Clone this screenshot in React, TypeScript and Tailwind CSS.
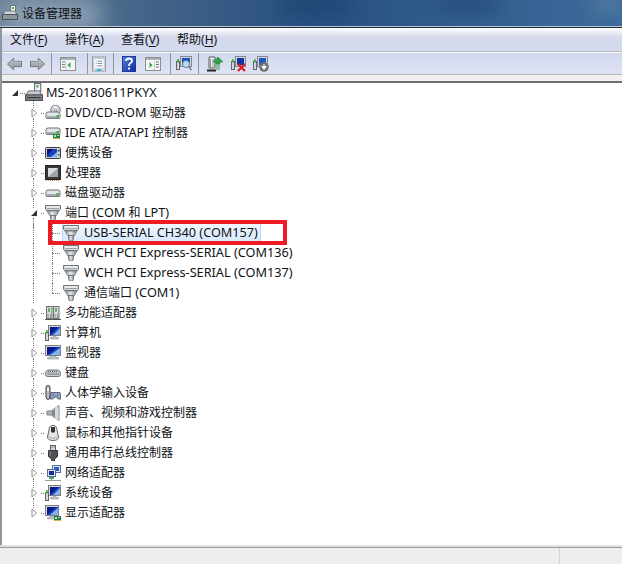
import React from "react";

const Svg = ({ children, s = 16 }: { children: React.ReactNode; s?: number }) => (
  <svg width={s} height={s} viewBox="0 0 16 16" className="block shrink-0">
    {children}
  </svg>
);

function T({ text }: { text: string }) {
  const parts = text.split(/([\u3000-\u9fff]+)/).filter(Boolean);
  return (
    <span className="-mt-[2px] whitespace-nowrap text-[12.7px]">
      {parts.map((p, i) =>
        /[\u3000-\u9fff]/.test(p) ? (
          <span key={i} className="text-[12px]">
            {p}
          </span>
        ) : (
          <span key={i} className="whitespace-pre">
            {p}
          </span>
        ),
      )}
    </span>
  );
}

const PortIcon = () => (
  <Svg>
    <defs>
      <linearGradient id="pg" x1="0" y1="0" x2="1" y2="0">
        <stop offset="0" stopColor="#858b90" />
        <stop offset="0.45" stopColor="#e6e9eb" />
        <stop offset="1" stopColor="#7c8287" />
      </linearGradient>
    </defs>
    <path d="M0.5 0.5h15v3.5l-1 1.5h-13l-1-1.5z" fill="#d6d9dc" stroke="#6f757a" />
    <path d="M2 2h12" stroke="#fbfcfc" />
    <path d="M2 3.5h12" stroke="#9ca2a7" />
    <path d="M2 6h12l-2.5 4.5h-7z" fill="url(#pg)" stroke="#787e83" strokeWidth="0.8" />
    <path d="M5.5 10.5h5v3l-1 2.5h-3l-1-2.5z" fill="url(#pg)" stroke="#62676c" strokeWidth="0.8" />
  </Svg>
);

const Drive = ({ y = 9 }: { y?: number }) => (
  <g>
    <path d={`M1 ${y + 1}q0-2 2-2h10q2 0 2 2v3.5q0 1-1 1h-12q-1 0-1-1z`} fill="#e3e6e8" stroke="#6c7276" />
    <path d={`M1.5 ${y + 3}h13v2.2h-13z`} fill="#a4abb0" />
    <rect x="11.5" y={y + 2} width="2.5" height="2.5" fill="#49ad38" />
  </g>
);

const Monitor = ({ x = 0, y = 0, w = 13, h = 10 }: { x?: number; y?: number; w?: number; h?: number }) => (
  <g>
    <rect x={x + 0.5} y={y + 0.5} width={w} height={h} fill="#d5d8db" stroke="#7b7f83" />
    <path d={`M${x + 2} ${y + 2}h${w - 2}v${h - 2}h-${w - 2}z`} fill="#1746c4" />
    <path d={`M${x + 2} ${y + 2}h${w - 4}l-${w - 4} ${h - 2}z`} fill="#061a8a" />
    <path d={`M${x + w} ${y + 3}v${h - 3}h-${w - 5}z`} fill="#86b2ec" />
    <path d={`M${x + 5} ${y + h + 1}h${w - 9}v1.5h2.5v1.5h-${w - 4}v-1.5h2.5z`} fill="#c5c9cc" stroke="#7f8387" strokeWidth="0.5" />
  </g>
);

const Plug = ({ x = 0, y = 6 }: { x?: number; y?: number }) => (
  <g>
    <rect x={x + 0.5} y={y + 0.5} width="3" height="8" fill="#d4d8db" stroke="#62676b" />
    <rect x={x + 1.2} y={y - 2} width="1.6" height="3.5" fill="#3aad30" />
  </g>
);

const Card = ({ x = 9, y = 11 }: { x?: number; y?: number }) => (
  <g>
    <rect x={x} y={y} width="7" height="5" fill="#23804a" />
    <path d={`M${x + 1} ${y + 1}h2v2h-2zM${x + 4} ${y + 1}h2v1h-2z`} fill="#b9e2b4" />
    <path d={`M${x} ${y + 4.5}h7`} stroke="#d5b347" />
  </g>
);

const ICONS: Record<string, () => React.ReactElement> = {
  root: () => (
    <Svg s={18}>
      <rect x="8.5" y="0.5" width="5.5" height="7" fill="#f2f5f2" stroke="#6d7275" />
      <rect x="10" y="2" width="2" height="2" fill="#4bb042" />
      <path d="M3 7h10l2 4h-14z" fill="#c4c9cd" stroke="#676c70" strokeWidth="0.8" />
      <rect x="0.5" y="10.5" width="15" height="5" fill="#7f868c" stroke="#4d5257" />
      <path d="M2 13h12" stroke="#30363b" />
    </Svg>
  ),
  dvd: () => (
    <Svg>
      <circle cx="10.5" cy="5" r="4.8" fill="#cfd4d8" stroke="#767b7f" />
      <path d="M10.5 5L8 1h5z" fill="#f1f3f4" />
      <path d="M10.5 5l3.5 3-2.5 1.5z" fill="#a97fc0" />
      <circle cx="10.5" cy="5" r="1" fill="#fff" stroke="#666" strokeWidth="0.5" />
      <Drive y={8} />
    </Svg>
  ),
  ide: () => (
    <Svg>
      <Drive y={4} />
      <Card x={8} y={9} />
    </Svg>
  ),
  portable: () => (
    <Svg>
      <rect x="0.5" y="2.5" width="15" height="11" rx="1" fill="#c9ccce" stroke="#3a3e41" />
      <rect x="2" y="4" width="10" height="8" fill="#1640bd" />
      <path d="M2 4h6l-6 7z" fill="#05156f" />
      <path d="M12 7v5h-6z" fill="#86b2ec" />
      <rect x="13" y="5" width="1.5" height="1.5" fill="#222" />
      <rect x="13" y="9" width="1.5" height="1.5" fill="#555" />
    </Svg>
  ),
  cpu: () => (
    <Svg>
      <rect x="0.5" y="0.5" width="15" height="14" fill="#383838" stroke="#262626" />
      <rect x="3" y="3" width="10" height="9" fill="#a0a4a7" />
      <path d="M3 3h10l-10 9z" fill="#d9dcde" />
      <path d="M1 15.5h14" stroke="#c9973a" strokeDasharray="1 1" />
    </Svg>
  ),
  disk: () => (
    <Svg>
      <Drive y={6} />
    </Svg>
  ),
  port: PortIcon,
  multi: () => (
    <Svg>
      <rect x="1.5" y="1.5" width="5.5" height="12" fill="#d5dad6" stroke="#6b7175" />
      <rect x="8.5" y="1.5" width="5.5" height="12" fill="#d5dad6" stroke="#6b7175" />
      <path d="M4 3v4M11 3v4" stroke="#36ab31" strokeWidth="1.5" />
      <path d="M0 14.5h16" stroke="#50555a" />
      <path d="M3 9v4M5.5 9v4M10 9v4M12.5 9v4" stroke="#8a9094" />
    </Svg>
  ),
  computer: () => (
    <Svg>
      <Monitor x={3} y={0} w={12} h={10} />
      <Plug x={0} y={7} />
    </Svg>
  ),
  monitor: () => (
    <Svg>
      <Monitor x={0} y={0} w={15} h={10} />
    </Svg>
  ),
  keyboard: () => (
    <Svg>
      <path d="M0.5 9.5q0-4.5 3-4.5h9q3 0 3 4.5q0 2-2 2h-11q-2 0-2-2z" fill="#c7ccd0" stroke="#70767b" />
      <path d="M3 6.5h10M2.5 8h11M2.5 9.5h11" stroke="#5e6469" strokeDasharray="1 1" />
    </Svg>
  ),
  hid: () => (
    <Svg>
      <path d="M1 3q0-2.5 2-2.5t2 2.5v8q0 3.5-2 3.5t-2-3.5z" fill="#bcc2c6" stroke="#2f3539" />
      <rect x="2" y="3" width="2" height="3" fill="#eef" />
      <path d="M6 7.5h9l1 6.5h-3l-1-2h-3l-1 2h-3z" fill="#93a3c2" stroke="#3f4a5e" strokeWidth="0.8" />
      <path d="M8 10h1M12 10h1" stroke="#1f3e8a" />
    </Svg>
  ),
  sound: () => (
    <Svg>
      <path d="M2 6h4l8-5.5v15l-8-5.5h-4z" fill="#aeb3b7" stroke="#7f8488" />
      <path d="M10 3v10l3.5 2V1z" fill="#d9dcdf" />
      <path d="M7 6.5l3-2v7l-3-2z" fill="#7f8488" />
    </Svg>
  ),
  mouse: () => (
    <Svg>
      <path d="M4 5q0-4.5 4-4.5t4 4.5l1.5 7q0 3.5-5.5 3.5t-5.5-3.5z" fill="#e2e4e6" stroke="#676b6f" />
      <path d="M6 2h4v5q-2 1.5-4 0z" fill="#333538" />
      <path d="M3.5 12q4 3 9 0" stroke="#a2a6a9" fill="none" />
    </Svg>
  ),
  usb: () => (
    <Svg>
      <rect x="5.5" y="0.5" width="5" height="5" fill="#d5d8da" stroke="#5d6165" />
      <path d="M6.5 2h1M8.5 2h1" stroke="#555" />
      <path d="M3.5 5.5h9v6l-3 2.5v2h-3v-2l-3-2.5z" fill="#505458" stroke="#35383b" />
      <path d="M5 6v5" stroke="#85898d" />
    </Svg>
  ),
  network: () => (
    <Svg>
      <rect x="7.5" y="0.5" width="8" height="7" fill="#e0e4f0" stroke="#5c6ba0" />
      <rect x="9" y="2" width="5" height="4" fill="#2a59c8" />
      <rect x="2.5" y="4.5" width="8" height="7" fill="#e0e4f0" stroke="#5c6ba0" />
      <rect x="4" y="6" width="5" height="4" fill="#103398" />
      <path d="M6.5 11.5v3M4 13h5" stroke="#1f9c42" strokeWidth="1.5" />
      <path d="M0 15.5h16" stroke="#95a09e" />
    </Svg>
  ),
  system: () => (
    <Svg>
      <Monitor x={3} y={0} w={12} h={10} />
      <Plug x={0} y={7} />
    </Svg>
  ),
  display: () => (
    <Svg>
      <Monitor x={0} y={0} w={13} h={10} />
      <Card x={9} y={11} />
    </Svg>
  ),
};

const dots = "border-dotted border-[#7a7a7a]";

function Expander({ open }: { open?: boolean }) {
  return open ? (
    <svg width="8" height="8" viewBox="0 0 8 8" className="block">
      <path d="M7 1v6H1z" fill="#333" />
    </svg>
  ) : (
    <svg width="8" height="10" viewBox="0 0 8 10" className="block">
      <path d="M2 1l4.5 4-4.5 4z" fill="#fff" stroke="#8f8f8f" />
    </svg>
  );
}

function Category({ icon, label, open, last }: { icon: string; label: string; open?: boolean; last?: boolean }) {
  const Icon = ICONS[icon];
  return (
    <div className="relative flex h-5 items-center pl-[28px]">
      <span className="flex w-2 justify-center">
        <Expander open={open} />
      </span>
      <span className={`ml-[3px] w-[3px] border-t ${dots}`} />
      <span className="ml-[1px]">
        <Icon />
      </span>
      <span className="ml-[4px] flex items-center">
        <T text={label} />
      </span>
      {!last && <span className={`absolute left-[31px] top-[15px] h-[10px] border-l ${dots}`} />}
    </div>
  );
}

function Port({ label, selected, last }: { label: string; selected?: boolean; last?: boolean }) {
  return (
    <div className="relative flex h-5 items-center pl-[50px]">
      <span className={`absolute left-[31px] top-0 h-5 border-l ${dots}`} />
      <span className={`absolute left-[50px] top-0 border-l ${dots} ${last ? "h-[10px]" : "h-5"}`} />
      <span className={`w-2 border-t ${dots}`} />
      <span
        className={`ml-[2px] flex h-[21px] items-center border-x pr-[3px] ${
          selected
            ? "w-[199px] border-[#b8d6f3] bg-gradient-to-b from-[#f3f8fe] to-[#d3e6fa]"
            : "border-transparent"
        }`}
      >
        <PortIcon />
        <span className="ml-[5px] flex items-center">
          <T text={label} />
        </span>
      </span>
    </div>
  );
}

const Sep = ({ w }: { w: number }) => (
  <span className="flex justify-center" style={{ width: w }}>
    <span className="h-[22px] w-px bg-[#8f939c]" />
  </span>
);

const Slot = ({ w, children }: { w: number; children: React.ReactNode }) => (
  <span className="flex justify-center" style={{ width: w }}>
    {children}
  </span>
);

const Arrow = ({ flip }: { flip?: boolean }) => (
  <svg width="17" height="14" viewBox="0 0 18 16" className={flip ? "block -scale-x-100" : "block"}>
    <path d="M1 8l7-6.5v3.5h9v6H8v3.5z" fill="#a5a8ac" stroke="#686b6f" />
    <path d="M3 8l4-4v2h9" fill="none" stroke="#c9cccf" />
  </svg>
);

const Win = ({ variant }: { variant: "l" | "r" }) => (
  <svg width="16" height="14" viewBox="0 0 16 14" className="block">
    <rect x="0.5" y="0.5" width="15" height="13" fill="#f6f7f7" stroke="#8c9094" />
    <path d="M1 1h14v2H1z" fill="#aab0b5" />
    {variant === "l" ? (
      <>
        <path d="M2 5h3M2 7.5h3M2 10h3" stroke="#777" />
        <path d="M10.5 5v6l-3-3z" fill="#2fa64a" />
        <path d="M6 4v9" stroke="#c4c8cb" />
      </>
    ) : (
      <>
        <path d="M11 5h3M11 7.5h3M11 10h3" stroke="#777" />
        <path d="M4.5 5v6l3-3z" fill="#2fa64a" />
        <path d="M9.5 4v9" stroke="#c4c8cb" />
      </>
    )}
  </svg>
);

const Props = () => (
  <svg width="15" height="16" viewBox="0 0 15 16" className="block">
    <rect x="0.5" y="0.5" width="14" height="15" fill="#e8ecef" stroke="#8d9296" />
    <rect x="2" y="2" width="11" height="11" fill="#fff" stroke="#c1c6ca" />
    <path d="M4 5h1M6 5h5M4 7.5h1M6 7.5h5M4 10h1M6 10h5" stroke="#6d7ea0" />
    <rect x="5" y="13.5" width="5" height="2" fill="#2fb4e8" />
  </svg>
);

const Help = () => (
  <svg width="14" height="16" viewBox="0 0 14 16" className="block">
    <defs>
      <linearGradient id="hg" x1="0" y1="0" x2="1" y2="1">
        <stop offset="0" stopColor="#5a7fe0" />
        <stop offset="1" stopColor="#0d2a9a" />
      </linearGradient>
    </defs>
    <rect x="0.5" y="0.5" width="13" height="15" fill="url(#hg)" stroke="#1f3a9a" />
    <path d="M4 5q0-2.5 3-2.5t3 2.5q0 1.5-2 2.5q-1 .6-1 2.5" fill="none" stroke="#fff" strokeWidth="1.8" />
    <rect x="6" y="11.5" width="2" height="2" fill="#fff" />
  </svg>
);

const Scan = () => (
  <svg width="16" height="16" viewBox="0 0 16 16" className="block">
    <Plug x={0} y={5} />
    <rect x="4.5" y="0.5" width="11" height="10" fill="#d5dade" stroke="#82878b" />
    <rect x="6" y="2" width="8" height="7" fill="#1d4fc4" />
    <circle cx="10" cy="8" r="3.5" fill="#b8dcf5" stroke="#6d7d8a" />
    <path d="M12.5 10.5l3 3.5" stroke="#7b8186" strokeWidth="1.6" />
  </svg>
);

const Update = () => (
  <svg width="16" height="16" viewBox="0 0 16 16" className="block">
    <path d="M2 1h6v11H2z" fill="#eceeea" stroke="#55595c" />
    <path d="M3.5 3v8M6 3v8" stroke="#8f9498" />
    <path d="M0 14.5h9" stroke="#222" strokeWidth="2" />
    <path d="M11 1l5 5h-3v2h-4v-2h-3z" fill="#2aa64a" stroke="#1d7a35" strokeWidth="0.5" />
    <path d="M9 9h4M9 11h4M9 13h4" stroke="#2aa64a" strokeWidth="1.2" />
  </svg>
);

const Disable = () => (
  <svg width="16" height="16" viewBox="0 0 16 16" className="block">
    <Plug x={0} y={5} />
    <rect x="4.5" y="0.5" width="10" height="10" fill="#d5dade" stroke="#82878b" />
    <rect x="6" y="2" width="7" height="7" fill="#12329f" />
    <path d="M7 8l7 7M14 8l-7 7" stroke="#dd1f26" strokeWidth="2.4" />
  </svg>
);

const Uninstall = () => (
  <svg width="16" height="16" viewBox="0 0 16 16" className="block">
    <Plug x={0} y={5} />
    <rect x="4.5" y="0.5" width="10" height="10" fill="#d5dade" stroke="#82878b" />
    <rect x="6" y="2" width="7" height="7" fill="#2155c8" />
    <circle cx="11" cy="11" r="4.8" fill="#6f7377" />
    <path d="M11 8v4M8.8 10.5L11 13.5l2.2-3z" stroke="#fff" fill="#fff" />
  </svg>
);

function Menu({ label, k, w }: { label: string; k: string; w: number }) {
  return (
    <span className="whitespace-nowrap" style={{ width: w }}>
      {label}(<span className="underline underline-offset-2">{k}</span>)
    </span>
  );
}

export default function App() {
  return (
    <div className="flex h-[564px] w-[622px] flex-col overflow-hidden bg-white font-['Noto_Sans','Noto_Sans_CJK_SC',sans-serif] text-[12px] leading-none text-[#0f1216]">
      <div className="relative flex h-[26px] shrink-0 items-center overflow-hidden bg-gradient-to-r from-[#5d7791] via-[#274f7f] to-[#3c6c9c] pl-[2px]">
        <span className="absolute top-0 left-0 h-[30px] w-[100px] bg-[#97a7b8] blur-md" />
        <span className="absolute top-[2px] left-[280px] h-[8px] w-[70px] bg-[#1c3f6a] blur-sm" />
        <span className="absolute top-[2px] left-[440px] h-[8px] w-[60px] bg-[#1f4470] blur-sm" />
        <span className="absolute top-0 right-0 h-[10px] w-[30px] bg-[#5c7f9f] blur-sm" />
        <span className="relative">
          <svg width="16" height="16" viewBox="0 0 16 16" className="block">
            <rect x="8.5" y="0.5" width="5" height="6" fill="#f2f5f2" stroke="#6d7275" />
            <rect x="10" y="2" width="2" height="2" fill="#4bb042" />
            <path d="M3 6h10l2 4H1z" fill="#cfd4d8" stroke="#676c70" strokeWidth="0.8" />
            <rect x="0.5" y="9.5" width="15" height="5" fill="#8f969c" stroke="#4d5257" />
          </svg>
        </span>
        <span className="relative mt-[2px] ml-[4px] text-[12px] text-[#0c1015]">设备管理器</span>
      </div>
      <div className="h-px shrink-0 bg-[#b9c7d6]" />
      <div className="h-px shrink-0 bg-[#1e2a36]" />
      <div className="flex min-h-0 flex-1 flex-col border-l-2 border-[#8d97a2]">
        <div className="flex h-[23px] shrink-0 items-center bg-gradient-to-b from-white via-[#d5daec] via-40% to-[#d3d9ec] pl-[8px]">
          <Menu label="文件" k="F" w={55} />
          <Menu label="操作" k="A" w={56} />
          <Menu label="查看" k="V" w={56} />
          <Menu label="帮助" k="H" w={60} />
        </div>
        <div className="h-px shrink-0 bg-[#b8bac2]" />
        <div className="h-px shrink-0 bg-[#f4f5fa]" />
        <div className="flex h-[21px] shrink-0 items-center bg-gradient-to-b from-[#d3d9ec] to-[#dde3f5] pt-px">
          <Slot w={24}><Arrow /></Slot>
          <Slot w={22}><Arrow flip /></Slot>
          <Sep w={6} />
          <Slot w={28}><Win variant="l" /></Slot>
          <Sep w={10} />
          <Slot w={14}><Props /></Slot>
          <Sep w={14} />
          <Slot w={18}><Help /></Slot>
          <Slot w={30}><Win variant="r" /></Slot>
          <Sep w={4} />
          <Slot w={24}><Scan /></Slot>
          <Sep w={4} />
          <Slot w={30}><Update /></Slot>
          <Slot w={18}><Disable /></Slot>
          <Slot w={26}><Uninstall /></Slot>
        </div>
        <div className="h-px shrink-0 bg-[#b4b6bc]" />
        <div className="h-[6px] shrink-0 bg-[#f0f0f0]" />
        <div className="h-[2px] shrink-0 bg-[#6d6e70]" />
        <div className="relative min-h-0 flex-1 bg-white">
          <div className="relative flex h-5 items-center pl-[9px]">
            <span className="flex w-2 justify-center">
              <Expander open />
            </span>
            <span className={`ml-px w-[5px] border-t ${dots}`} />
            <span className="-mt-[2px]">{ICONS.root()}</span>
            <span className="ml-[3px] flex items-center">
              <T text="MS-20180611PKYX" />
            </span>
            <span className={`absolute left-[31px] top-[15px] h-[10px] border-l ${dots}`} />
          </div>
          <Category icon="dvd" label="DVD/CD-ROM 驱动器" />
          <Category icon="ide" label="IDE ATA/ATAPI 控制器" />
          <Category icon="portable" label="便携设备" />
          <Category icon="cpu" label="处理器" />
          <Category icon="disk" label="磁盘驱动器" />
          <Category icon="port" label="端口 (COM 和 LPT)" open />
          <Port label="USB-SERIAL CH340 (COM157)" selected />
          <Port label="WCH PCI Express-SERIAL (COM136)" />
          <Port label="WCH PCI Express-SERIAL (COM137)" />
          <Port label="通信端口 (COM1)" last />
          <Category icon="multi" label="多功能适配器" />
          <Category icon="computer" label="计算机" />
          <Category icon="monitor" label="监视器" />
          <Category icon="keyboard" label="键盘" />
          <Category icon="hid" label="人体学输入设备" />
          <Category icon="sound" label="声音、视频和游戏控制器" />
          <Category icon="mouse" label="鼠标和其他指针设备" />
          <Category icon="usb" label="通用串行总线控制器" />
          <Category icon="network" label="网络适配器" />
          <Category icon="system" label="系统设备" />
          <Category icon="display" label="显示适配器" last />
          <span className="absolute top-[137px] left-[46px] h-[25px] w-[239px] border-4 border-[#ed1c24]" />
        </div>
      </div>
      <div className="h-[2px] shrink-0 bg-[#e2e2e2]" />
      <div className="h-px shrink-0 bg-[#9a9a9a]" />
      <div className="flex h-4 shrink-0 justify-end bg-[#f0eded]">
        <span className="mr-[62px] w-px bg-[#d5d3d3]" />
      </div>
    </div>
  );
}
